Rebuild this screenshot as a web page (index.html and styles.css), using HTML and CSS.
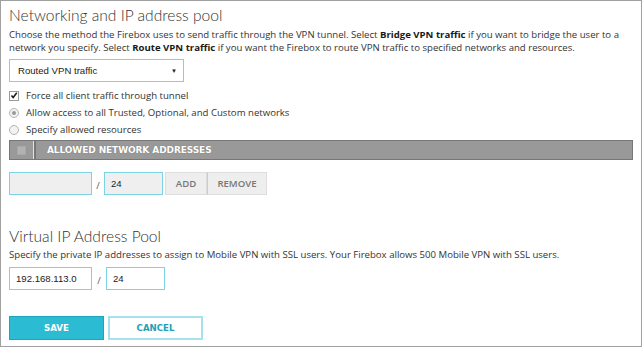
FILE: index.html
```html
<!DOCTYPE html>
<html lang="en">
    <head>
        <meta charset="UTF-8">
        <title>Mobile VPN with SSL</title>
        <link rel="stylesheet" href="styles.css">
    </head>
    <body>
        <div class="panel">
            <h2>Networking and IP address pool</h2>
            <p class="help">Choose the method the Firebox uses to send traffic through the VPN tunnel. Select <b>Bridge VPN traffic</b> if you want to bridge the user to a network you specify. Select <b>Route VPN traffic</b> if you want the Firebox to route VPN traffic to specified networks and resources.</p>

            <div class="select">
                <span>Routed VPN traffic</span>
                <span class="caret">&#9660;</span>
            </div>

            <div class="options">
                <div class="option">
                    <span class="check">
                        <svg width="9" height="9" viewBox="0 0 9 9"><path d="M1.6 4.4 L3.6 6.8 L7.6 1.4" fill="none" stroke="#1a1a1a" stroke-width="1.7"/></svg>
                    </span>
                    Force all client traffic through tunnel
                </div>
                <div class="option">
                    <span class="radio on"></span>
                    Allow access to all Trusted, Optional, and Custom networks
                </div>
                <div class="option">
                    <span class="radio"></span>
                    Specify allowed resources
                </div>
            </div>

            <div class="table-head">
                <div class="cell-check"><span class="box"></span></div>
                <div class="cell-title">ALLOWED NETWORK ADDRESSES</div>
            </div>

            <div class="row disabled">
                <div class="field wide"></div>
                <span class="slash">/</span>
                <div class="field narrow">24</div>
                <div class="btn-group">
                    <span class="gray-btn add">ADD</span>
                    <span class="gray-btn remove">REMOVE</span>
                </div>
            </div>

            <h2 class="second">Virtual IP Address Pool</h2>
            <p class="help">Specify the private IP addresses to assign to Mobile VPN with SSL users. Your Firebox allows 500 Mobile VPN with SSL users.</p>

            <div class="row pool">
                <div class="field wide">192.168.113.0</div>
                <span class="slash">/</span>
                <div class="field narrow">24</div>
            </div>

            <div class="actions">
                <span class="btn save">SAVE</span>
                <span class="btn cancel">CANCEL</span>
            </div>
        </div>
    </body>
</html>
```

FILE: styles.css
```css
body {
    margin: 0;
    background: #fff;
    font-family: "Open Sans", Arial, sans-serif;
    color: #333;
}
.panel {
    width: 642px;
    height: 347px;
    box-sizing: border-box;
    border: 1px solid #a0a0a0;
    padding: 4px 8px 0 8px;
}
h2 {
    font-family: Lato, "Open Sans", sans-serif;
    font-weight: 300;
    font-size: 15.6px;
    color: #333;
    margin: 0;
    line-height: 21px;
}
h2.second {
    margin-top: 31px;
}
.help {
    font-size: 9.6px;
    line-height: 13px;
    margin: 2px 0 0 0;
    color: #333;
}
.second + .help {
    margin-top: 1px;
}
.help b {
    font-weight: 700;
    color: #1a1a1a;
}
.select {
    width: 175px;
    height: 23px;
    box-sizing: border-box;
    border: 1px solid #7dd3e2;
    margin-top: 5px;
    display: flex;
    align-items: center;
    justify-content: space-between;
    padding: 0 6px 0 8px;
    font-family: Arial, "Liberation Sans", sans-serif;
    font-size: 9.6px;
    color: #222;
}
.caret {
    font-size: 6px;
    color: #222;
}
.options {
    margin-top: 5px;
}
.option {
    display: flex;
    align-items: center;
    font-size: 9.6px;
    height: 17px;
    color: #333;
}
.check, .radio {
    width: 10px;
    height: 10px;
    box-sizing: border-box;
    border: 1px solid #999;
    background: #fff;
    margin: 0 7px 0 0;
    display: flex;
    align-items: center;
    justify-content: center;
}
.radio {
    border-radius: 50%;
    border-color: #b5b5b5;
    background: #f2f2f2;
}
.radio.on::after {
    content: "";
    width: 4px;
    height: 4px;
    border-radius: 50%;
    background: #9a9a9a;
}
.table-head {
    display: flex;
    height: 20px;
    margin-top: 2px;
    background: #999;
    border: 1px solid #777;
    box-sizing: border-box;
}
.cell-check {
    width: 23px;
    border-right: 1px solid #e4e4e4;
    display: flex;
    align-items: center;
    justify-content: center;
}
.box {
    width: 7px;
    height: 7px;
    background: #b2b2b2;
    border: 1px solid #a8a8a8;
}
.cell-title {
    flex: 1;
    border-left: 2px solid #777;
    display: flex;
    align-items: center;
    padding-left: 11px;
    font-family: Verdana, "DejaVu Sans", sans-serif;
    font-weight: bold;
    font-size: 9px;
    letter-spacing: -0.1px;
    color: #fff;
    text-shadow: 0 0 1px #6a6a6a;
}
.row {
    display: flex;
    align-items: center;
    margin-top: 12px;
}
.field {
    height: 23px;
    box-sizing: border-box;
    border: 1px solid #7dd3e2;
    background: #fff;
    display: flex;
    align-items: center;
    padding-left: 6px;
    font-family: Arial, "Liberation Sans", sans-serif;
    font-size: 9.6px;
    color: #222;
}
.field.wide {
    width: 83px;
}
.field.narrow {
    width: 59px;
}
.slash {
    width: 14px;
    text-align: center;
    font-size: 9.6px;
    color: #555;
    padding-top: 3px;
}
.disabled .field {
    background: #efefef;
}
.disabled .slash {
    width: 12px;
}
.btn-group {
    display: flex;
    margin-left: 2px;
}
.gray-btn {
    height: 23px;
    box-sizing: border-box;
    border: 1px solid #ddd;
    background: #eee;
    color: #777;
    font-size: 9.6px;
    font-weight: 600;
    display: flex;
    align-items: center;
    justify-content: center;
}
.add {
    width: 42px;
}
.remove {
    width: 60px;
    border-left: 1px solid #ccc;
}
.pool {
    margin-top: 6px;
}
.actions {
    display: flex;
    gap: 4px;
    margin-top: 26px;
}
.btn {
    width: 95px;
    height: 24px;
    box-sizing: border-box;
    display: flex;
    align-items: center;
    justify-content: center;
    font-family: Verdana, "DejaVu Sans", sans-serif;
    font-size: 8.6px;
    font-weight: bold;
}
.save {
    background: #2bbcd4;
    border: 1px solid #1ea5bd;
    color: #fff;
}
.cancel {
    background: #fff;
    border: 2px solid #a6e2ec;
    color: #1f9fb8;
}
```
